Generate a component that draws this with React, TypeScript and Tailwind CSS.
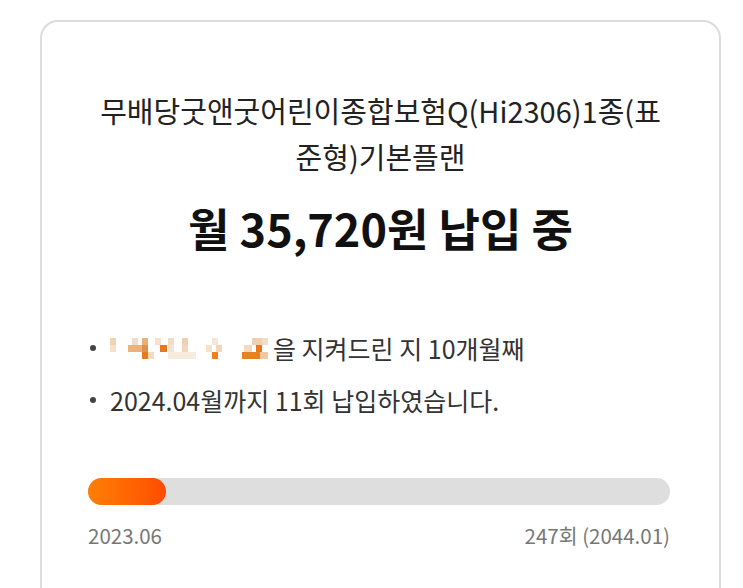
import React from "react";

const cells: [number, number, number, number, string][] = [
  [0, 4, 6, 7, "#f3d2b0"],
  [22, 4, 6, 7, "#f1dcc6"],
  [32, 4, 6, 7, "#e9b07a"],
  [45, 4, 6, 7, "#f4e2cf"],
  [58, 4, 6, 7, "#f3dcc4"],
  [72, 4, 6, 7, "#efd0b0"],
  [102, 4, 6, 7, "#f6e6d6"],
  [142, 4, 10, 7, "#eed0b2"],
  [152, 4, 6, 7, "#f4dcc4"],
  [0, 11, 6, 7, "#f6e0ca"],
  [18, 11, 14, 7, "#ecb27a"],
  [32, 11, 6, 7, "#e2914a"],
  [50, 11, 7, 7, "#e8781c"],
  [58, 11, 6, 7, "#f5e4d2"],
  [72, 11, 6, 7, "#f0d6bc"],
  [96, 11, 6, 7, "#f5e2ce"],
  [106, 11, 6, 7, "#f2d6b8"],
  [134, 11, 8, 7, "#f3d9bf"],
  [146, 11, 6, 7, "#e7791c"],
  [32, 18, 6, 7, "#e97a1c"],
  [38, 18, 6, 7, "#f4dcc2"],
  [58, 18, 28, 7, "#f7ebde"],
  [102, 18, 6, 7, "#f0801f"],
  [132, 18, 18, 7, "#e8821e"],
  [150, 18, 8, 7, "#f0c8a0"],
];

function Mosaic() {
  return (
    <svg width="162" height="28" viewBox="0 0 162 28" className="inline-block align-middle mr-[1px] shrink-0">
      {cells.map(([x, y, w, h, c], i) => (
        <rect key={i} x={x} y={y} width={w} height={h} fill={c} />
      ))}
    </svg>
  );
}

export default function App() {
  return (
    <div
      className="w-[743px] h-[588px] bg-white overflow-hidden"
      style={{ fontFamily: '"Noto Sans CJK KR", "Noto Sans", sans-serif' }}
    >
      <div className="ml-[40px] mt-[20px] w-[681px] h-[600px] rounded-[18px] border-2 border-[#dcdcdc] px-[46px] pt-[65px]">
        <div className="text-center text-[29px] leading-[46px] text-[#222] whitespace-nowrap">
          무배당굿앤굿어린이종합보험Q(Hi2306)1종(표
          <br />
          준형)기본플랜
        </div>
        <div className="mt-[21px] text-center text-[45px] leading-[56px] font-bold text-[#111] whitespace-nowrap">
          월 35,720원 납입 중
        </div>
        <ul className="mt-[74px] flex flex-col gap-[16px] text-[25px] leading-[36px] text-[#333]">
          <li className="flex items-center">
            <span className="w-[6px] h-[6px] rounded-full bg-[#444] ml-[2px] mr-[14px] shrink-0" />
            <Mosaic />
            <span>을 지켜드린 지 10개월째</span>
          </li>
          <li className="flex items-center">
            <span className="w-[6px] h-[6px] rounded-full bg-[#444] ml-[2px] mr-[14px] shrink-0" />
            <span>2024.04월까지 11회 납입하였습니다.</span>
          </li>
        </ul>
        <div className="mt-[60px] h-[27px] w-[582px] rounded-full bg-[#dedede]">
          <div className="h-full w-[78px] rounded-full bg-gradient-to-r from-[#ff7e06] to-[#ff4b00]" />
        </div>
        <div className="mt-[16px] w-[582px] flex justify-between text-[20.5px] leading-[28px] text-[#777]">
          <span>2023.06</span>
          <span>247회 (2044.01)</span>
        </div>
      </div>
    </div>
  );
}
